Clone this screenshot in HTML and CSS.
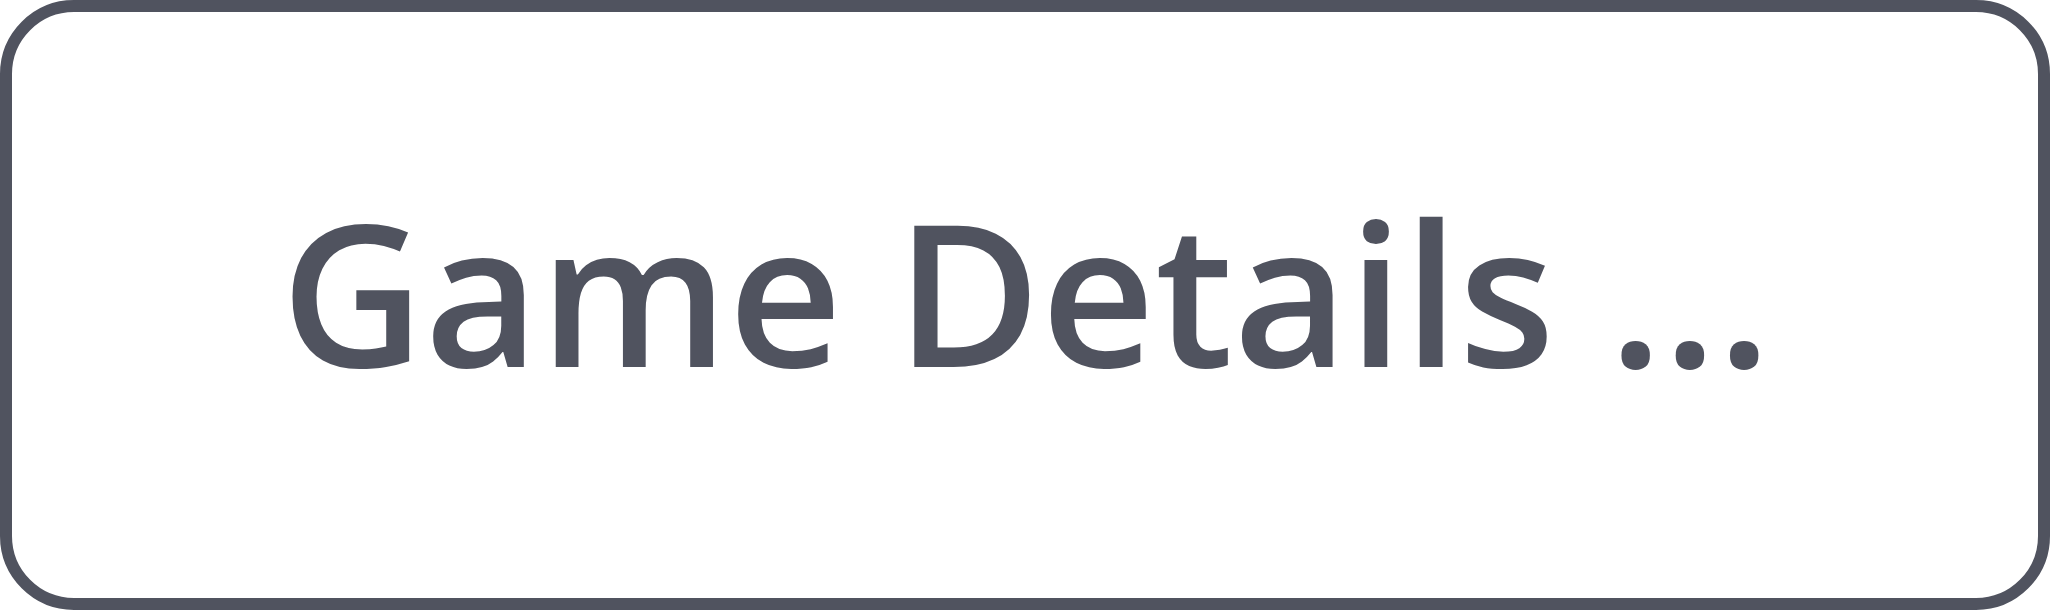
FILE: index.html
```html
<!DOCTYPE html>
<html lang="en">
<head>
    <meta charset="utf-8">
    <title>Game Details</title>
    <link rel="stylesheet" href="styles.css">
</head>
<body>
    <div id="container">
        <div class="details-button">Game Details ...</div>
    </div>
</body>
</html>
```

FILE: styles.css
```css
html,
body {
    margin: 0;
    padding: 0;
    background-color: #ffffff;
    overflow: hidden;
}

#container {
    width: 2050px;
    height: 610px;
}

.details-button {
    box-sizing: border-box;
    width: 100%;
    height: 100%;
    display: flex;
    align-items: center;
    justify-content: center;
    padding: 0 0 30px 2px;
    border: 12px solid #50535f;
    border-radius: 74px;
    font-family: "Open Sans", sans-serif;
    font-size: 198px;
    font-weight: 600;
    word-spacing: 2px;
    color: #50535f;
    white-space: nowrap;
}
```
